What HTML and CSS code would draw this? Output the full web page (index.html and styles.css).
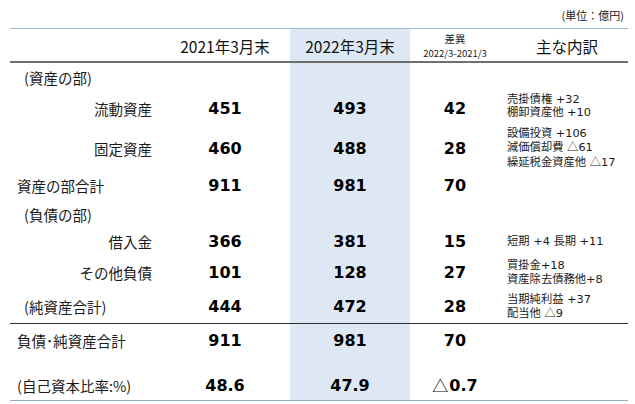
FILE: index.html
```html
<!DOCTYPE html>
<html lang="ja">
<head>
<meta charset="utf-8">
<link rel="stylesheet" href="styles.css">
</head>
<body>
<div class="unit">(単位：億円)</div>
<div class="table">
  <div class="row head">
    <div class="cell lab"></div>
    <div class="cell num h">2021年3月末</div>
    <div class="cell num h hl">2022年3月末</div>
    <div class="cell num diff-h"><span class="dh1">差異</span><span class="dh2">2022/3-2021/3</span></div>
    <div class="cell num h note-h">主な内訳</div>
  </div>
  <div class="row r1">
    <div class="cell lab indent">(資産の部)</div>
    <div class="cell num"></div>
    <div class="cell num hl"></div>
    <div class="cell num"></div>
    <div class="cell note"></div>
  </div>
  <div class="row r2">
    <div class="cell lab right">流動資産</div>
    <div class="cell num v">451</div>
    <div class="cell num v hl">493</div>
    <div class="cell num v">42</div>
    <div class="cell note up"><span>売掛債権 +32</span><span>棚卸資産他 +10</span></div>
  </div>
  <div class="row r3">
    <div class="cell lab right">固定資産</div>
    <div class="cell num v">460</div>
    <div class="cell num v hl">488</div>
    <div class="cell num v">28</div>
    <div class="cell note"><span>設備投資 +106</span><span>減価償却費 <span class="t">△</span>61</span><span>繰延税金資産他 <span class="t">△</span>17</span></div>
  </div>
  <div class="row r4">
    <div class="cell lab">資産の部合計</div>
    <div class="cell num v">911</div>
    <div class="cell num v hl">981</div>
    <div class="cell num v">70</div>
    <div class="cell note"></div>
  </div>
  <div class="row r5">
    <div class="cell lab indent">(負債の部)</div>
    <div class="cell num"></div>
    <div class="cell num hl"></div>
    <div class="cell num"></div>
    <div class="cell note"></div>
  </div>
  <div class="row r6">
    <div class="cell lab right">借入金</div>
    <div class="cell num v">366</div>
    <div class="cell num v hl">381</div>
    <div class="cell num v">15</div>
    <div class="cell note"><span>短期 +4 長期 +11</span></div>
  </div>
  <div class="row r7">
    <div class="cell lab right">その他負債</div>
    <div class="cell num v">101</div>
    <div class="cell num v hl">128</div>
    <div class="cell num v">27</div>
    <div class="cell note"><span>買掛金+18</span><span>資産除去債務他+8</span></div>
  </div>
  <div class="row r8">
    <div class="cell lab indent">(純資産合計)</div>
    <div class="cell num v">444</div>
    <div class="cell num v hl">472</div>
    <div class="cell num v">28</div>
    <div class="cell note"><span>当期純利益 +37</span><span>配当他 <span class="t">△</span>9</span></div>
  </div>
  <div class="row r9">
    <div class="cell lab">負債･純資産合計</div>
    <div class="cell num v">911</div>
    <div class="cell num v hl">981</div>
    <div class="cell num v">70</div>
    <div class="cell note"></div>
  </div>
  <div class="row r10">
    <div class="cell lab">(自己資本比率:%)</div>
    <div class="cell num v">48.6</div>
    <div class="cell num v hl">47.9</div>
    <div class="cell num v"><span class="tri">△</span>0.7</div>
    <div class="cell note"></div>
  </div>
</div>
</body>
</html>
```
FILE: styles.css
```css
html, body {
  margin: 0;
  padding: 0;
  background: #ffffff;
}
body {
  width: 635px;
  height: 404px;
  overflow: hidden;
  font-family: "Noto Sans CJK JP", "Noto Sans", sans-serif;
  color: #1a1a1a;
}
.unit {
  height: 28px;
  box-sizing: border-box;
  padding: 8px 11px 0 0;
  font-size: 11px;
  line-height: 15px;
  text-align: right;
  color: #222;
}
.table {
  margin-left: 10px;
  width: 618px;
  border-top: 1px solid #9ab8d8;
  border-bottom: 1px solid #8fb0d2;
}
.row {
  display: grid;
  grid-template-columns: 150px 130px 120px 90px 128px;
}
.cell {
  display: flex;
  align-items: center;
  box-sizing: border-box;
}
.hl {
  background: #dde8f4;
}
.head {
  height: 32px;
  border-bottom: 2px solid #6f6f6f;
}
.h {
  font-size: 15.5px;
  color: #111;
  padding-top: 1px;
}
.num {
  justify-content: center;
}
.diff-h {
  flex-direction: column;
  justify-content: center;
  align-items: center;
  color: #222;
  padding-top: 1px;
}
.dh1 {
  display: block;
  font-size: 10.5px;
  line-height: 14px;
}
.dh2 {
  display: block;
  font-size: 9.5px;
  line-height: 14px;
}
.note-h {
  padding-left: 6px;
}
.lab {
  font-size: 14.5px;
  color: #1a1a1a;
  padding-left: 7px;
  white-space: nowrap;
}
.lab.indent {
  padding-left: 14px;
}
.lab.right {
  justify-content: flex-end;
  padding-right: 8px;
}
.v {
  font-family: "DejaVu Sans", "Noto Sans CJK JP", sans-serif;
  font-weight: bold;
  font-size: 16px;
  color: #000;
}
.tri {
  font-family: "Noto Sans CJK JP", sans-serif;
  font-weight: normal;
  font-size: 16px;
  margin-right: 1px;
}
.note {
  flex-direction: column;
  justify-content: center;
  align-items: flex-start;
  padding-left: 7px;
  font-family: "DejaVu Sans", "Noto Sans CJK JP", sans-serif;
  font-size: 11.3px;
  line-height: 13.5px;
  color: #1a1a1a;
  white-space: nowrap;
}
.t {
  font-family: "Noto Sans CJK JP", sans-serif;
}
.note.up {
  padding-bottom: 5px;
}
.r1 { height: 28px; }
.r2 { height: 35px; }
.r3 { height: 44px; }
.r4 { height: 31px; }
.r5 { height: 27px; }
.r6 { height: 27px; }
.r7 { height: 35px; }
.r8 { height: 33px; border-bottom: 1px solid #2e2e2e; }
.r9 { height: 32px; }
.r10 { height: 44px; }
.r10 .cell { padding-top: 14px; }
```
